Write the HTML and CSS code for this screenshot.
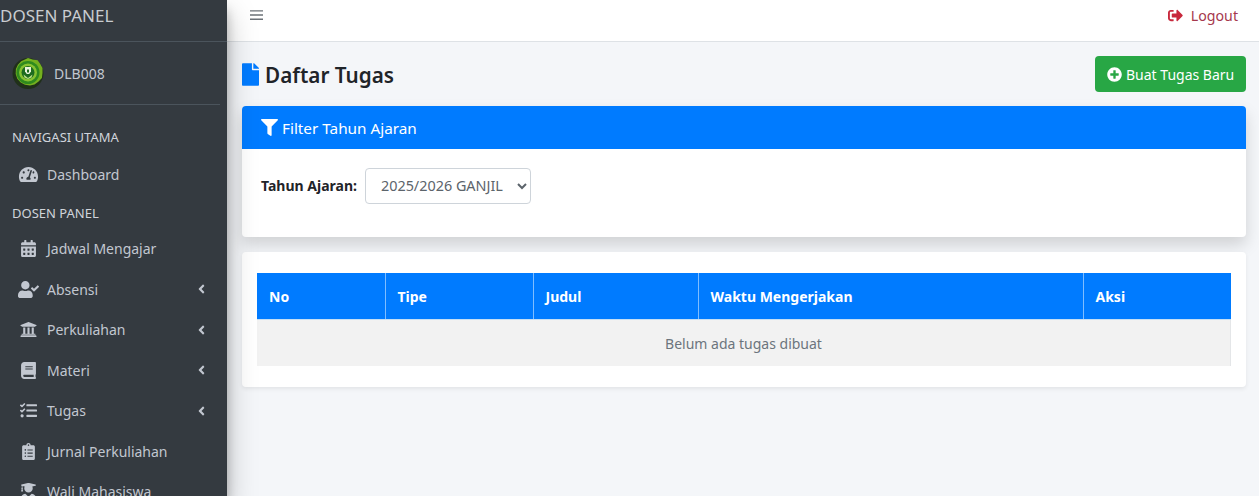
FILE: index.html
```html
<!DOCTYPE html>
<html lang="en">
<head>
  <meta charset="UTF-8">
  <meta name="viewport" content="width=device-width, initial-scale=1.0">
  <title>Daftar Tugas</title>
  <link rel="stylesheet" href="styles.css">
</head>
<body>
  <div class="wrapper">

    <!-- Sidebar -->
    <aside class="sidebar">
      <div class="brand">DOSEN PANEL</div>
      <div class="user-panel">
        <svg class="avatar" viewBox="0 0 32 32">
          <circle cx="16" cy="16.500" r="15.500" fill="#20301a"/>
          <path d="M16 1l4.600 1.600 5 .6 2.700 3.700 2.200 4.100v5l-.6 5-3.300 3.600-4.100 2.800-4.500 1.100-5-.8-4.300-2.300-3.400-3.600-1.600-4.800.2-5 2-4.300 3.300-3.500 4.300-2z" fill="#74b01f"/>
          <circle cx="16" cy="15.500" r="11.500" fill="#2f8a1e"/>
          <circle cx="16" cy="15.500" r="9" fill="#86c232"/>
          <circle cx="16" cy="15.500" r="6.500" fill="#1d6b1f"/>
          <path d="M13 10h6v4.500l-1.800 2.500h-2.400l-1.800-2.500z" fill="#e9f2dc"/>
          <path d="M15 12.500h2v3h-2z" fill="#1d6b1f"/>
          <path d="M11.500 17.500l4.500 3.500 4.500-3.500-1 3-3.500 1.500-3.500-1.500z" fill="#bfe08a"/>
        </svg>
        <span class="user-name">DLB008</span>
      </div>

      <nav class="nav">
        <div class="nav-header">NAVIGASI UTAMA</div>
        <a class="nav-item">
          <svg class="nav-icon" viewBox="0 0 576 512"><path d="M288 32C128.940 32 0 160.940 0 320c0 52.800 14.250 102.260 39.060 144.800 5.610 9.620 16.300 15.200 27.440 15.200h443c11.140 0 21.830-5.580 27.440-15.200C561.750 422.260 576 372.800 576 320c0-159.060-128.940-288-288-288zm0 64c14.710 0 26.580 10.130 30.320 23.650-1.110 2.260-2.640 4.230-3.450 6.670l-9.220 27.670c-5.130 3.490-10.970 6.010-17.640 6.010-17.670 0-32-14.330-32-32S270.330 96 288 96zM96 384c-17.670 0-32-14.330-32-32s14.330-32 32-32 32 14.330 32 32-14.330 32-32 32zm48-160c-17.670 0-32-14.330-32-32s14.330-32 32-32 32 14.330 32 32-14.330 32-32 32zm246.770-72.410l-61.330 184C343.130 347.330 352 364.540 352 384c0 11.720-3.380 22.550-8.880 32H232.880c-5.500-9.450-8.880-20.280-8.880-32 0-33.940 26.500-61.430 59.900-63.590l61.340-184.010c4.170-12.560 17.730-19.450 30.360-15.170 12.570 4.190 19.350 17.790 15.170 30.360zm14.660 57.200l15.520-46.550c3.470-1.290 7.130-2.230 11.050-2.230 17.670 0 32 14.330 32 32s-14.330 32-32 32c-11.380-.010-20.890-6.280-26.570-15.220zM480 384c-17.670 0-32-14.330-32-32s14.330-32 32-32 32 14.330 32 32-14.330 32-32 32z"/></svg>
          <span>Dashboard</span>
        </a>
        <div class="nav-header nav-header-second">DOSEN PANEL</div>
        <a class="nav-item">
          <svg class="nav-icon" viewBox="0 0 448 512"><path d="M0 464c0 26.500 21.500 48 48 48h352c26.500 0 48-21.500 48-48V192H0v272zm320-196c0-6.600 5.400-12 12-12h40c6.600 0 12 5.400 12 12v40c0 6.600-5.400 12-12 12h-40c-6.600 0-12-5.400-12-12v-40zm0 128c0-6.600 5.400-12 12-12h40c6.600 0 12 5.400 12 12v40c0 6.600-5.400 12-12 12h-40c-6.600 0-12-5.400-12-12v-40zM192 268c0-6.600 5.400-12 12-12h40c6.600 0 12 5.400 12 12v40c0 6.600-5.400 12-12 12h-40c-6.600 0-12-5.400-12-12v-40zm0 128c0-6.600 5.400-12 12-12h40c6.600 0 12 5.400 12 12v40c0 6.600-5.400 12-12 12h-40c-6.600 0-12-5.400-12-12v-40zM64 268c0-6.600 5.400-12 12-12h40c6.600 0 12 5.400 12 12v40c0 6.600-5.400 12-12 12H76c-6.600 0-12-5.400-12-12v-40zm0 128c0-6.600 5.400-12 12-12h40c6.600 0 12 5.400 12 12v40c0 6.600-5.400 12-12 12H76c-6.600 0-12-5.400-12-12v-40zM400 64h-48V16c0-8.800-7.200-16-16-16h-32c-8.800 0-16 7.200-16 16v48H160V16c0-8.800-7.200-16-16-16h-32c-8.800 0-16 7.200-16 16v48H48C21.500 64 0 85.500 0 112v48h448v-48c0-26.500-21.500-48-48-48z"/></svg>
          <span>Jadwal Mengajar</span>
        </a>
        <a class="nav-item">
          <svg class="nav-icon" viewBox="0 0 640 512"><path d="M224 256c70.700 0 128-57.300 128-128S294.700 0 224 0 96 57.300 96 128s57.300 128 128 128zm89.600 32h-16.700c-22.200 10.200-46.900 16-72.900 16s-50.600-5.800-72.900-16h-16.700C60.200 288 0 348.200 0 422.400V464c0 26.500 21.500 48 48 48h352c26.500 0 48-21.500 48-48v-41.600c0-74.200-60.200-134.400-134.400-134.400zm323-128.400l-27.800-28.100c-4.600-4.700-12.100-4.700-16.800-.1l-104.800 104-45.500-45.800c-4.600-4.700-12.100-4.700-16.800-.1l-28.100 27.900c-4.700 4.600-4.700 12.100-.1 16.800l81.700 82.300c4.600 4.700 12.100 4.700 16.800.1l141.300-140.200c4.600-4.700 4.700-12.200.1-16.800z"/></svg>
          <span>Absensi</span>
          <svg class="nav-arrow" viewBox="0 0 256 512"><path d="M31.700 239l136-136c9.400-9.400 24.600-9.400 33.900 0l22.600 22.600c9.400 9.400 9.400 24.600 0 33.900L127.900 256l96.400 96.400c9.400 9.400 9.400 24.600 0 33.900L201.700 409c-9.400 9.400-24.600 9.400-33.900 0l-136-136c-9.500-9.400-9.500-24.600-.1-34z"/></svg>
        </a>
        <a class="nav-item">
          <svg class="nav-icon" viewBox="0 0 512 512"><path d="M496 128v16a8 8 0 0 1-8 8h-24v12c0 6.627-5.373 12-12 12H60c-6.627 0-12-5.373-12-12v-12H24a8 8 0 0 1-8-8v-16a8 8 0 0 1 4.941-7.392l232-88a7.996 7.996 0 0 1 6.118 0l232 88A8 8 0 0 1 496 128zm-24 304H40c-13.255 0-24 10.745-24 24v16a8 8 0 0 0 8 8h464a8 8 0 0 0 8-8v-16c0-13.255-10.745-24-24-24zM96 192v192H60c-6.627 0-12 5.373-12 12v20h416v-20c0-6.627-5.373-12-12-12h-36V192h-64v192h-64V192h-64v192h-64V192H96z"/></svg>
          <span>Perkuliahan</span>
          <svg class="nav-arrow" viewBox="0 0 256 512"><path d="M31.700 239l136-136c9.400-9.400 24.600-9.400 33.900 0l22.600 22.600c9.400 9.400 9.400 24.600 0 33.900L127.900 256l96.400 96.400c9.400 9.400 9.400 24.600 0 33.900L201.700 409c-9.400 9.400-24.600 9.400-33.900 0l-136-136c-9.500-9.400-9.500-24.600-.1-34z"/></svg>
        </a>
        <a class="nav-item">
          <svg class="nav-icon" viewBox="0 0 448 512"><path d="M448 360V24c0-13.300-10.700-24-24-24H96C43 0 0 43 0 96v320c0 53 43 96 96 96h328c13.300 0 24-10.700 24-24v-16c0-7.500-3.500-14.300-8.900-18.700-4.200-15.400-4.200-59.300 0-74.700 5.400-4.300 8.900-11.100 8.900-18.600zM128 134c0-3.300 2.700-6 6-6h212c3.300 0 6 2.700 6 6v20c0 3.300-2.700 6-6 6H134c-3.300 0-6-2.700-6-6v-20zm0 64c0-3.300 2.700-6 6-6h212c3.300 0 6 2.700 6 6v20c0 3.300-2.700 6-6 6H134c-3.300 0-6-2.700-6-6v-20zm253.400 250H96c-17.700 0-32-14.300-32-32 0-17.600 14.400-32 32-32h285.400c-1.900 17.100-1.900 46.900 0 64z"/></svg>
          <span>Materi</span>
          <svg class="nav-arrow" viewBox="0 0 256 512"><path d="M31.700 239l136-136c9.400-9.400 24.600-9.400 33.900 0l22.600 22.600c9.400 9.400 9.400 24.600 0 33.900L127.900 256l96.400 96.400c9.400 9.400 9.400 24.600 0 33.900L201.700 409c-9.400 9.400-24.600 9.400-33.900 0l-136-136c-9.500-9.400-9.500-24.600-.1-34z"/></svg>
        </a>
        <a class="nav-item">
          <svg class="nav-icon" viewBox="0 0 512 512"><path d="M139.610 35.500a12 12 0 0 0-17 0L58.930 98.810l-22.700-22.120a12 12 0 0 0-17 0L3.530 92.410a12 12 0 0 0 0 17l47.590 47.400a12.780 12.780 0 0 0 17.610 0l15.590-15.620L156.520 69a12.090 12.090 0 0 0 .09-17zm0 159.190a12 12 0 0 0-17 0l-63.680 63.720-22.700-22.100a12 12 0 0 0-17 0L3.530 252a12 12 0 0 0 0 17L51 316.500a12.770 12.770 0 0 0 17.600 0l15.700-15.690 72.200-72.220a12 12 0 0 0 .09-16.900zM64 368c-26.490 0-48.590 21.500-48.590 48S37.530 464 64 464a48 48 0 0 0 0-96zm432 16H208a16 16 0 0 0-16 16v32a16 16 0 0 0 16 16h288a16 16 0 0 0 16-16v-32a16 16 0 0 0-16-16zm0-320H208a16 16 0 0 0-16 16v32a16 16 0 0 0 16 16h288a16 16 0 0 0 16-16V80a16 16 0 0 0-16-16zm0 160H208a16 16 0 0 0-16 16v32a16 16 0 0 0 16 16h288a16 16 0 0 0 16-16v-32a16 16 0 0 0-16-16z"/></svg>
          <span>Tugas</span>
          <svg class="nav-arrow" viewBox="0 0 256 512"><path d="M31.700 239l136-136c9.400-9.400 24.600-9.400 33.900 0l22.600 22.600c9.400 9.400 9.400 24.600 0 33.900L127.900 256l96.400 96.400c9.400 9.400 9.400 24.600 0 33.900L201.700 409c-9.400 9.400-24.600 9.400-33.900 0l-136-136c-9.500-9.400-9.500-24.600-.1-34z"/></svg>
        </a>
        <a class="nav-item">
          <svg class="nav-icon" viewBox="0 0 384 512"><path d="M336 64h-80c0-35.300-28.700-64-64-64s-64 28.700-64 64H48C21.500 64 0 85.500 0 112v352c0 26.500 21.500 48 48 48h288c26.500 0 48-21.500 48-48V112c0-26.500-21.500-48-48-48zM96 424c-13.300 0-24-10.700-24-24s10.700-24 24-24 24 10.700 24 24-10.700 24-24 24zm0-96c-13.300 0-24-10.700-24-24s10.700-24 24-24 24 10.700 24 24-10.700 24-24 24zm0-96c-13.300 0-24-10.700-24-24s10.700-24 24-24 24 10.700 24 24-10.700 24-24 24zm96-192c13.300 0 24 10.700 24 24s-10.700 24-24 24-24-10.700-24-24 10.700-24 24-24zm128 368c0 4.400-3.600 8-8 8H168c-4.400 0-8-3.600-8-8v-16c0-4.400 3.600-8 8-8h144c4.400 0 8 3.600 8 8v16zm0-96c0 4.400-3.600 8-8 8H168c-4.400 0-8-3.600-8-8v-16c0-4.400 3.600-8 8-8h144c4.400 0 8 3.600 8 8v16zm0-96c0 4.400-3.600 8-8 8H168c-4.400 0-8-3.600-8-8v-16c0-4.400 3.600-8 8-8h144c4.400 0 8 3.600 8 8v16z"/></svg>
          <span>Jurnal Perkuliahan</span>
        </a>
        <a class="nav-item">
          <svg class="nav-icon" viewBox="0 0 448 512"><path d="M319.400 320.600L224 416l-95.400-95.400C57.100 323.700 0 382.200 0 454.400v9.600c0 26.500 21.500 48 48 48h352c26.500 0 48-21.500 48-48v-9.600c0-72.200-57.100-130.700-128.600-133.800zM13.600 79.800l6.400 1.500v58.400c-7 4.200-12 11.500-12 20.300 0 8.400 4.600 15.400 11.100 19.700L3.500 242c-1.700 6.900 2.100 14 7.600 14h41.800c5.500 0 9.300-7.100 7.600-14l-15.600-62.300C51.400 175.400 56 168.400 56 160c0-8.800-5-16.100-12-20.300V87.100l66 15.900c-8.600 17.200-14 36.400-14 57 0 70.700 57.300 128 128 128s128-57.300 128-128c0-20.600-5.300-39.800-14-57l96.300-23.200c18.200-4.400 18.200-27.100 0-31.500l-190.400-46c-13-3.100-26.700-3.100-39.700 0L13.600 48.200c-18.100 4.400-18.100 27.200 0 31.600z"/></svg>
          <span>Wali Mahasiswa</span>
        </a>
      </nav>
    </aside>

    <div class="main">
      <!-- Top bar -->
      <header class="topbar">
        <svg class="menu-toggle" viewBox="0 0 14 12"><path d="M0 1.500h14M0 6h14M0 10.500h14"/></svg>
        <a class="logout">
          <svg class="logout-icon" viewBox="0 0 512 512"><path d="M497 273L329 441c-15 15-41 4.500-41-17v-96H152c-13.300 0-24-10.700-24-24v-96c0-13.300 10.700-24 24-24h136V88c0-21.400 25.900-32 41-17l168 168c9.300 9.400 9.300 24.600 0 34zM192 436v-40c0-6.600-5.400-12-12-12H96c-17.700 0-32-14.300-32-32V160c0-17.700 14.300-32 32-32h84c6.600 0 12-5.400 12-12V76c0-6.600-5.400-12-12-12H96c-53 0-96 43-96 96v192c0 53 43 96 96 96h84c6.600 0 12-5.400 12-12z"/></svg>
          <span>Logout</span>
        </a>
      </header>

      <main class="content">
        <div class="page-head">
          <h1 class="page-title">
            <svg class="title-icon" viewBox="0 0 384 512"><path d="M224 136V0H24C10.700 0 0 10.700 0 24v464c0 13.300 10.700 24 24 24h336c13.300 0 24-10.700 24-24V160H248c-13.200 0-24-10.800-24-24zm160-14.100v6.100H256V0h6.100c6.400 0 12.500 2.500 17 7l97.900 98c4.500 4.500 7 10.600 7 16.900z"/></svg>
            Daftar Tugas
          </h1>
          <button class="btn-create">
            <svg class="btn-icon" viewBox="0 0 512 512"><path d="M256 8C119 8 8 119 8 256s111 248 248 248 248-111 248-248S393 8 256 8zm144 276c0 6.600-5.400 12-12 12h-92v92c0 6.600-5.400 12-12 12h-56c-6.600 0-12-5.400-12-12v-92h-92c-6.600 0-12-5.400-12-12v-56c0-6.600 5.400-12 12-12h92v-92c0-6.600 5.400-12 12-12h56c6.600 0 12 5.400 12 12v92h92c6.600 0 12 5.400 12 12v56z"/></svg>
            Buat Tugas Baru
          </button>
        </div>

        <section class="card filter-card">
          <div class="card-header">
            <svg class="filter-icon" viewBox="0 0 512 512"><path d="M487.976 0H24.028C2.710 0-8.047 25.866 7.058 40.971L192 225.941V432c0 7.831 3.821 15.170 10.237 19.662l80 55.980C298.020 518.690 320 507.493 320 487.980V225.941l184.947-184.970C520.021 25.896 509.338 0 487.976 0z"/></svg>
            Filter Tahun Ajaran
          </div>
          <div class="filter-body">
            <label class="filter-label" for="tahunAjaran">Tahun Ajaran:</label>
            <select class="filter-select" id="tahunAjaran">
              <option>2025/2026 GANJIL</option>
            </select>
          </div>
        </section>

        <section class="card table-card">
          <table class="task-table">
            <thead>
              <tr>
                <th class="col-no">No</th>
                <th class="col-type">Tipe</th>
                <th class="col-title">Judul</th>
                <th class="col-time">Waktu Mengerjakan</th>
                <th>Aksi</th>
              </tr>
            </thead>
            <tbody>
              <tr>
                <td colspan="5">Belum ada tugas dibuat</td>
              </tr>
            </tbody>
          </table>
        </section>
      </main>
    </div>

  </div>
</body>
</html>
```

FILE: styles.css
```css
* {
  box-sizing: border-box;
}

body {
  font-family: 'Noto Sans', 'Open Sans', sans-serif;
  font-size: 14px;
  background-color: #f4f6f9;
  color: #212529;
  margin: 0;
  overflow: hidden;
}

.wrapper {
  display: flex;
  height: 100vh;
  overflow: hidden;
}

/* Sidebar */
.sidebar {
  flex: 0 0 227px;
  background-color: #343a40;
  color: #c2c7d0;
  box-shadow: 0 14px 28px rgba(0, 0, 0, 0.25), 0 10px 10px rgba(0, 0, 0, 0.22);
  overflow: hidden;
  z-index: 2;
}

.brand {
  height: 42px;
  padding: 5px 0 0 0;
  font-size: 17px;
  line-height: 22px;
  color: #c9ccd0;
  border-bottom: 1px solid #4b545c;
}

.user-panel {
  display: flex;
  align-items: center;
  gap: 10px;
  height: 63px;
  margin-right: 7px;
  padding-left: 12px;
  border-bottom: 1px solid #4b545c;
}

.avatar {
  width: 32px;
  height: 32px;
}

.user-name {
  font-size: 14px;
}

.nav {
  padding-top: 22px;
}

.nav-header {
  padding-left: 12px;
  margin-bottom: 7px;
  font-size: 13px;
  line-height: 20px;
  color: #d0d4db;
}

.nav-header-second {
  margin-top: 8px;
  margin-bottom: 6px;
}

.nav-item {
  display: flex;
  align-items: center;
  height: 40.500px;
  padding-left: 18px;
  font-size: 14px;
  color: #c2c7d0;
}

.nav-icon {
  flex: 0 0 21px;
  height: 17px;
  margin-right: 8px;
  fill: #c2c7d0;
}

.nav-arrow {
  width: 9px;
  height: 14px;
  margin-left: auto;
  margin-right: 21px;
  fill: #c2c7d0;
}

/* Top bar */
.main {
  flex: 1;
  min-width: 0;
}

.topbar {
  display: flex;
  justify-content: space-between;
  height: 42px;
  padding: 9px 21px 0 23px;
  background: #ffffff;
  border-bottom: 1px solid #dee2e6;
}

.menu-toggle {
  width: 13px;
  height: 12px;
  fill: none;
  stroke: #6b7177;
  stroke-width: 1.500;
}

.logout {
  display: flex;
  align-items: flex-start;
  gap: 8px;
  margin-top: -1px;
  color: #a6384d;
  font-size: 14.200px;
  line-height: 15px;
}

.logout-icon {
  width: 15px;
  height: 15px;
  fill: #c8283c;
}

/* Content */
.content {
  padding: 14px 13px 0 15px;
}

.page-head {
  display: flex;
  justify-content: space-between;
  align-items: center;
  height: 36px;
  margin-bottom: 14px;
}

.page-title {
  display: flex;
  align-items: center;
  gap: 6px;
  margin: 2px 0 0;
  font-size: 20.700px;
  font-weight: 600;
  color: #1f2429;
}

.title-icon {
  width: 17px;
  height: 23px;
  margin-top: -2px;
  fill: #007bff;
}

.btn-create {
  display: flex;
  align-items: center;
  gap: 4px;
  height: 36px;
  width: 151px;
  padding: 0 0 0 12px;
  background-color: #28a745;
  color: #ffffff;
  font-family: inherit;
  font-size: 14px;
  border: none;
  border-radius: 4px;
}

.btn-icon {
  width: 15px;
  height: 15px;
  fill: #ffffff;
}

.card {
  background: #ffffff;
  border-radius: 4px;
  box-shadow: 0 2px 4px rgba(0, 0, 0, 0.075);
  margin-bottom: 15px;
}

.filter-card {
  box-shadow: 0 8px 16px rgba(0, 0, 0, 0.15);
}

.card-header {
  display: flex;
  align-items: center;
  gap: 4px;
  height: 43px;
  padding-left: 19px;
  background-color: #007bff;
  color: #ffffff;
  font-size: 15.300px;
  border-radius: 4px 4px 0 0;
}

.filter-icon {
  width: 17px;
  height: 17px;
  fill: #ffffff;
}

.filter-body {
  display: flex;
  align-items: center;
  gap: 8px;
  height: 88px;
  padding: 0 0 15px 19px;
}

.filter-label {
  font-size: 14px;
  font-weight: 700;
  color: #1f2429;
}

.filter-select {
  width: 166px;
  height: 36px;
  padding: 0 0 0 11px;
  background: #ffffff;
  color: #5c646b;
  font-family: inherit;
  font-size: 14.400px;
  border: 1px solid #ced4da;
  border-radius: 4px;
}

/* Table */
.table-card {
  height: 135px;
  padding: 21px 15px 0;
}

.task-table {
  width: 100%;
  border-collapse: collapse;
  table-layout: fixed;
}

.task-table th {
  height: 46px;
  padding: 1px 12px 0;
  background-color: #007bff;
  color: #ffffff;
  font-size: 14px;
  font-weight: 700;
  text-align: left;
  border-left: 1px solid #7fbdff;
  border-bottom: 1px solid #c5dff5;
}

.task-table th:first-child {
  border-left: none;
}

.col-no {
  width: 128px;
}

.col-type {
  width: 148px;
}

.col-title {
  width: 165px;
}

.col-time {
  width: 385px;
}

.task-table td {
  height: 47px;
  padding-top: 3px;
  background-color: #f2f2f2;
  color: #6c757d;
  font-size: 14px;
  text-align: center;
  border-right: 1px solid #e4e6e8;
}
```
